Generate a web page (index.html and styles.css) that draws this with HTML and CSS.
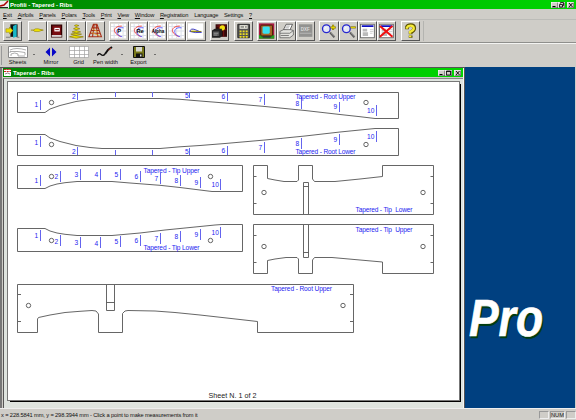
FILE: index.html
```
<!DOCTYPE html>
<html lang="en">
<head>
    <meta charset="UTF-8">
    <meta name="viewport" content="width=device-width, initial-scale=1.0">
    <title>Profili - Tapered - Ribs</title>
    <link rel="stylesheet" href="styles.css">
</head>
<body>
    <svg width="0" height="0" class="defs">
        <symbol id="polar" viewBox="0 0 17 17">
            <rect width="17" height="17" fill="#fff"/>
            <path d="M3.5 0v17M8.5 0v17M13.5 0v17M0 3.5h17M0 8.5h17M0 13.5h17" stroke="#d9dde6" fill="none"/>
            <path d="M12 3C6 3 3 6 4 9s4 4 7 6" stroke="#e33" fill="none"/>
            <path d="M14 5C8 4 6 7 6.500 10s3 4 6 5" stroke="#55f" fill="none"/>
        </symbol>
        <symbol id="lens" viewBox="0 0 17 17">
            <path d="M10 10l5 5.500" stroke="#555" stroke-width="2.200"/>
            <path d="M10.500 10l4.500 5" stroke="#aaa" stroke-width=".7"/>
            <circle cx="6" cy="6" r="4.300" fill="#e4e8f4" stroke="#2525d0" stroke-width="1.500"/>
            <path d="M4 6l2-2" stroke="#fff"/>
        </symbol>
        <symbol id="sheet" viewBox="0 0 17 17">
            <rect x=".5" y="1" width="15.500" height="15" fill="#fff" stroke="#666"/>
            <path d="M2 3h13" stroke="#1010c0" stroke-width="2"/>
            <path d="M3 6h5v3H3zM3 10h6v4H3z" fill="#bbb"/>
            <path d="M11 7h4M11 9h4M11 11h3" stroke="#ccc"/>
        </symbol>
    </svg>

    <div class="title-bar main-title">
        <svg class="app-icon" viewBox="0 0 9 9"><rect width="9" height="8" y=".5" fill="#eee"/><path d="M0 6l4-1 4-4" stroke="#a00" stroke-width="1.500" fill="none"/><path d="M0 7.500h8" stroke="#222"/></svg>
        <span>Profili - Tapered - Ribs</span>
        <div class="window-buttons">
            <i><svg viewBox="0 0 7 6"><path d="M1.500 4.500h3" stroke="#000"/></svg></i>
            <i><svg viewBox="0 0 7 6"><path d="M2.500 1.500V.5h3v3h-1M1.500 2.500h3v2.500h-3z" stroke="#000" stroke-width=".8" fill="none"/></svg></i>
            <i class="close"><svg viewBox="0 0 7 6"><path d="M2 1l3.500 4M5.500 1L2 5" stroke="#000" stroke-width=".9"/></svg></i>
        </div>
    </div>

    <div class="menu">
        <span><u>E</u>xit</span>
        <span><u>A</u>irfoils</span>
        <span><u>P</u>anels</span>
        <span><u>P</u>olars</span>
        <span><u>T</u>ools</span>
        <span><u>P</u>rint</span>
        <span><u>V</u>iew</span>
        <span><u>W</u>indow</span>
        <span><u>R</u>egistration</span>
        <span>Language</span>
        <span>Settings</span>
        <span><u>?</u></span>
    </div>

    <div class="toolbar">
        <div class="group first">
            <b><svg viewBox="0 0 17 17"><path d="M6 1h8v14H6z" fill="#111"/><path d="M9 3l4-2v14l-4 1z" fill="#18b8c8"/><path d="M1 6h4V4l4 4-4 4v-2H1z" fill="#eee000" stroke="#887800" stroke-width=".5"/><path d="M1 15.500h5M13 15.500h3" stroke="#777"/></svg></b>
        </div>
        <div class="group">
            <b><svg viewBox="0 0 17 17"><path d="M1 7.500h14" stroke="#998800"/><path d="M4 7.500q1-2 5-1.500l5 1.500-4 1.500H5z" fill="#f2e600" stroke="#887800" stroke-width=".6"/></svg></b>
            <b><svg viewBox="0 0 17 17"><path d="M3 2h11v13H3z" fill="#7a0c10" stroke="#300" stroke-width="1.500"/><path d="M3 13h11v2H3z" fill="#ddd"/><path d="M6 5h6v4H6z" fill="#fff"/><path d="M7 7h4" stroke="#700"/></svg></b>
            <b><svg viewBox="0 0 17 17"><g fill="#f2e600" stroke="#807000" stroke-width=".7"><path d="M6 2.500l2-1 3 1-3 1zM5 6l3-1.500L12 6 8 7zM3.500 9.500L8 8l5 1.500-5 1.200zM2 12l5-1 7 1-6 1.300zM.5 15L6 13.500l10 1.500-8 1.500z"/></g></svg></b>
            <b><svg viewBox="0 0 17 17"><path d="M6 1h4l5 14H1zM7 1L5 15M9 1l2 14M5 5h6M4 8h8M2 11h12M1 15h14" stroke="#a83018" stroke-width="1.200" fill="none"/><path d="M5 6l7 4M4 10l9 4" stroke="#e0a030"/></svg></b>
        </div>
        <div class="group">
            <b><svg viewBox="0 0 17 17"><use href="#polar"/><text x="7" y="11">P</text></svg></b>
            <b><svg viewBox="0 0 17 17"><use href="#polar"/><text x="6" y="11">Re</text></svg></b>
            <b><svg viewBox="0 0 17 17"><use href="#polar"/><text x="2" y="11" class="alpha">Alpha</text></svg></b>
            <b><svg viewBox="0 0 17 17"><use href="#polar"/></svg></b>
            <b><svg viewBox="0 0 17 17"><path d="M0 0h17v17H0z" fill="#fff"/><path d="M2 9q1-4 6-2l7 3q-7 1-13-1" fill="#eee6a0" stroke="#3030d0"/><path d="M3 9h12" stroke="#888000"/></svg></b>
        </div>
        <div class="group">
            <b><svg viewBox="0 0 17 17"><path d="M4 1h13v14H4z" fill="#33090a"/><path d="M5 3h11M5 7h11M8 1v14M13 1v14" stroke="#a01818" stroke-width=".7"/><circle cx="11.500" cy="5" r="3" fill="#f0df10"/><path d="M0 8l3-2h8v8l-2 2H0z" fill="#222"/><path d="M1 9h7v5H1z" fill="#555"/><path d="M2 11h5M2 13h4" stroke="#999"/></svg></b>
        </div>
        <div class="group">
            <b><svg viewBox="0 0 17 17"><path d="M2 1h13v15H2z" fill="#555" stroke="#222"/><path d="M4 2h9v4H4z" fill="#f4f4e8"/><path d="M5 4h4M10 4h2" stroke="#333"/><path d="M4 9h9M4 12h9M4 15h9" stroke="#f0e020" stroke-width="2" stroke-dasharray="2.200 1.200"/></svg></b>
        </div>
        <div class="group">
            <b><svg viewBox="0 0 17 17"><path d="M0 0h17v17H0z" fill="#a81840"/><path d="M0 13h17v4H0z" fill="#20a020"/><rect x="2" y="2" width="13" height="12" rx="1" fill="#a86828" stroke="#402000"/><rect x="4" y="3.500" width="8" height="8" rx="1.500" fill="#38e0f0"/><path d="M4 15h9" stroke="#333" stroke-width="2"/></svg></b>
            <b><svg viewBox="0 0 17 17"><path d="M5 7l3-6h7l-3 7z" fill="#fff" stroke="#333" stroke-width=".8"/><path d="M8 3h4M7 5h4" stroke="#777" stroke-width=".7"/><path d="M1 9l4-2h8l3 1v5l-4 3H1z" fill="#e4e4e0" stroke="#555" stroke-width=".8"/><path d="M1 11h11l4-3M2 13.500h9" stroke="#555" fill="none" stroke-width=".8"/></svg></b>
            <b><svg viewBox="0 0 17 17"><path d="M1 1h15v14H1z" fill="#929290"/><path d="M2 11h13" stroke="#bbb"/><text x="3" y="8" class="dxf">DXF</text></svg></b>
        </div>
        <div class="group">
            <b><svg viewBox="0 0 17 17"><use href="#lens"/><path d="M10.500 4.500h6M13.500 1.500v6" stroke="#776b00" stroke-width="2.200"/><path d="M11 4.500h5M13.500 2v5" stroke="#f0e000"/></svg></b>
            <b><svg viewBox="0 0 17 17"><use href="#lens"/><path d="M10.500 4.500h6" stroke="#776b00" stroke-width="2.200"/><path d="M11 4.500h5" stroke="#f0e000"/></svg></b>
            <b><svg viewBox="0 0 17 17"><use href="#sheet"/></svg></b>
            <b><svg viewBox="0 0 17 17"><use href="#sheet"/><path d="M1 3l14 12M15 3L1 15" stroke="#f01010" stroke-width="2.200"/></svg></b>
        </div>
        <div class="group last">
            <b><svg viewBox="0 0 17 17"><path d="M4.500 6.500V4q1-2 4-2 4 0 4 3.500 0 2.500-4 4.500v2M8.500 13.500v2.500" stroke="#5c5200" stroke-width="4.200" fill="none"/><path d="M4.500 6V4.500q1-2 4-2 3.500 0 3.500 3 0 2.500-4 4v2M8 13.500v2" stroke="#f5ea38" stroke-width="2.600" fill="none"/></svg></b>
        </div>
    </div>

    <div class="toolbar2">
        <div class="tool sheets">
            <svg width="20" height="12" viewBox="0 0 20 12"><path d="M.5.5h19v11H.5z" fill="#fff" stroke="#888"/><path d="M2 4q6-3 16 0M2 7V5.500h8l7 1V9M3 10V8q4-2 7 0v2h7" stroke="#999" fill="none" stroke-width=".8"/></svg>
            <span>Sheets</span>
        </div>
        <div class="arrow"></div>
        <div class="tool mirror">
            <svg width="12" height="12" viewBox="0 0 12 12"><path d="M5 1.500v9L.5 6zM7 1.500v9l4.500-4.500z" fill="#0808c8"/></svg>
            <span>Mirror</span>
        </div>
        <div class="tool grid">
            <svg width="20" height="12" viewBox="0 0 20 12"><path d="M.5.5h19v11H.5zM5.500 0v12M10.500 0v12M15.500 0v12M0 4.500h20M0 8.500h20" fill="#fff" stroke="#a0a0a0" stroke-width=".7"/></svg>
            <span>Grid</span>
        </div>
        <div class="tool pen">
            <svg width="17" height="12" viewBox="0 0 17 12"><path d="M0 9.500q2-3 4-1t4-.5" stroke="#111" fill="none" stroke-width="1.300"/><path d="M8 8l3-4 4-3" stroke="#111" stroke-width="2" fill="none"/><path d="M11.500 4l2.500-2" stroke="#c03020"/></svg>
            <span>Pen width</span>
        </div>
        <div class="arrow"></div>
        <div class="tool export">
            <svg width="12" height="12" viewBox="0 0 12 12"><path d="M.5.5h11v11H.5z" fill="#77771a" stroke="#111"/><path d="M3 1h6v4.500H3z" fill="#d8d8d0"/><path d="M3 7.500h6.500V11H3z" fill="#111"/><path d="M7 8.500h1.500v2H7z" fill="#ddd"/></svg>
            <span>Export</span>
        </div>
        <div class="arrow"></div>
    </div>

    <div class="workspace">
        <div class="child">
            <div class="title-bar">
                <svg class="app-icon" viewBox="0 0 9 9"><path d="M1 1.500h7v6.500H1z" fill="#fff"/><path d="M1 1.500h7M1 3.500h7" stroke="#d02020" stroke-dasharray="2 .7"/><path d="M2 6q3-2 5 0" stroke="#888" fill="none"/></svg>
                <span>Tapered - Ribs</span>
                <div class="window-buttons">
                    <i><svg viewBox="0 0 7 6"><path d="M1.500 4.500h3" stroke="#000"/></svg></i>
                    <i><svg viewBox="0 0 7 6"><path d="M1.500 1h4v4h-4zM1.500 1.500h4" stroke="#000" stroke-width=".8" fill="none"/></svg></i>
                    <i class="close"><svg viewBox="0 0 7 6"><path d="M2 1l3.500 4M5.500 1L2 5" stroke="#000" stroke-width=".9"/></svg></i>
                </div>
            </div>
            <div class="view">
                <svg class="paper" viewBox="8 82 451 318">
                    <!-- rib outlines -->
                    <g class="outline">
                        <path d="M45 112.500H17.500V92.500H398.500V118.500H375L360 116.700 340 114.500 305 110.500 265 106.500 225 103 200 101 180 99.300 160 98.500H102L90 99.500 76 101.500 60 105.500 50 109z"/>
                        <path d="M45 134.500H17.500V155.500H398.500V128.500H375L360 130 340 132 305 136 265 140 225 143.500 200 145.500 180 146.800 160 148.500H102L90 147.500 76 145.500 60 141.500 50 138z"/>
                        <path d="M45 188.500H17.500V165.500H242.500V191.500H212L200 190 180 187.500 160 185.300 130 183 112 181.500H77L65 182.700 57 184 50 186z"/>
                        <path d="M45 228.500H17.500V251.500H242.500V224.500H222L215 225 190 227.500 165 230 140 233 112 235.500H77L65 234.300 57 233 50 231z"/>
                        <path d="M253.500 165.500H267.500V178.500L275 180 284 181.500H297L298.500 180V165.500H312.500V179L314.500 181.500H335L360 179 382.500 176.500V165.500H433.500V214.500H253.500z"/>
                        <path d="M253.500 273.500H267.500V260.500L275 259 286 257.500H297L298.500 259V273.500H312.500V260L314.500 257.500H332L360 260 382.500 262V273.500H433.500V224.500H253.500z"/>
                        <path d="M17.500 284.500H353.500V332.500H257.500V321.500L240 319.500 200 315 175 312.500 155 311 128 310.500 125 311 122.500 313.500V332.500H98.500V314L96 311 92 310.500 80 311.300 65 312.500 50 315 38.500 317.500 37.500 319V332.500H17.500z"/>
                        <path d="M303.500 214V182.500H308.500V214M303.500 186.500H308.500M303.500 225V257.500H308.500V225M303.500 252.500H308.500M106.500 285V310.500H114.500V285M106.500 302.500H114.500"/>
                        <path d="M254 176.500h2.500M254 203.500h2.500M433 176.500h-2.500M433 203.500h-2.500M254 235.500h2.500M254 262.500h2.500M433 235.500h-2.500M433 262.500h-2.500M18 294.500h3M18 321.500h3M353 294.500h-3M353 321.500h-3"/>
                    </g>
                    <g class="hole">
                        <circle cx="51.500" cy="102.500" r="2.200"/><circle cx="366" cy="102.500" r="2.200"/>
                        <circle cx="51.500" cy="144.500" r="2.200"/><circle cx="366" cy="144.500" r="2.200"/>
                        <circle cx="51.500" cy="176.500" r="2.200"/><circle cx="210.500" cy="176.500" r="2.200"/>
                        <circle cx="51.500" cy="240.500" r="2.200"/><circle cx="210.500" cy="240.500" r="2.200"/>
                        <circle cx="264" cy="192.500" r="2.200"/><circle cx="423" cy="192.500" r="2.200"/>
                        <circle cx="264" cy="246.500" r="2.200"/><circle cx="423" cy="246.500" r="2.200"/>
                        <circle cx="28.500" cy="305.500" r="2.200"/><circle cx="343" cy="305.500" r="2.200"/>
                    </g>
                    <!-- station marks -->
                    <g class="mark">
                        <path d="M40.500 100v10M77.500 92v8M115.500 92v5M152.500 92v5M189.500 92v6M227.500 92v9M264.500 94v11M301.500 97v12M339.500 102v10M376.500 105v11"/>
                        <path d="M40.500 136v11M77.500 147v8M115.500 150v5M152.500 150v5M189.500 148v7M227.500 146v9M264.500 142v11M301.500 138v11M339.500 134v11M376.500 131v11"/>
                        <path d="M40.500 175v11M60.500 171v11M80.500 169v11M100.500 169v11M120.500 169v11M140.500 171v11M160.500 173v11M180.500 175v11M200.500 177v11M220.500 179v11"/>
                        <path d="M40.500 230v11M60.500 235v11M80.500 237v11M100.500 237v11M120.500 236v11M140.500 235v11M160.500 233v11M180.500 231v11M200.500 229v11M220.500 227v11"/>
                    </g>
                    <g class="label">
                        <text x="34.500" y="107">1</text><text x="72" y="98.500">2</text><text x="185" y="97.500">5</text><text x="221.500" y="99">6</text><text x="258.500" y="101.500">7</text><text x="295.500" y="106">8</text><text x="333.500" y="109">9</text><text x="367" y="113">10</text>
                        <text x="34.500" y="144.500">1</text><text x="72" y="153.500">2</text><text x="185" y="153.500">5</text><text x="221.500" y="153">6</text><text x="258.500" y="149.500">7</text><text x="295.500" y="145.500">8</text><text x="333.500" y="142">9</text><text x="367" y="138.500">10</text>
                        <text x="34.500" y="183">1</text><text x="54.500" y="178.500">2</text><text x="74.500" y="176.500">3</text><text x="94.500" y="176.500">4</text><text x="114.500" y="177">5</text><text x="134.500" y="179">6</text><text x="154.500" y="180.500">7</text><text x="174.500" y="182.500">8</text><text x="194.500" y="184.500">9</text><text x="211.500" y="187">10</text>
                        <text x="34.500" y="238">1</text><text x="54.500" y="243.500">2</text><text x="74.500" y="245">3</text><text x="94.500" y="245.500">4</text><text x="114.500" y="244">5</text><text x="134.500" y="243">6</text><text x="154.500" y="241">7</text><text x="174.500" y="239">8</text><text x="194.500" y="237">9</text><text x="211.500" y="235">10</text>
                        <text x="295.500" y="99" textLength="60">Tapered - Root Upper</text>
                        <text x="295.500" y="153.500" textLength="60">Tapered - Root Lower</text>
                        <text x="143.500" y="172.500" textLength="56">Tapered - Tip Upper</text>
                        <text x="143.500" y="249.500" textLength="56">Tapered - Tip Lower</text>
                        <text x="355.500" y="211.500" textLength="57">Tapered - Tip&#160; Lower</text>
                        <text x="355.500" y="232" textLength="57">Tapered - Tip&#160; Upper</text>
                        <text x="271" y="291" textLength="61">Tapered - Root Upper</text>
                    </g>
                    <text class="sheet-no" x="208.500" y="398" textLength="48">Sheet N. 1 of 2</text>
                </svg>
            </div>
        </div>
        <div class="backdrop">
            <svg width="110" height="60" viewBox="465 290 110 60">
                <text class="pro shade" x="470.500" y="337.800" textLength="74" lengthAdjust="spacingAndGlyphs">Pro</text>
                <text class="pro" x="469" y="336.300" textLength="74" lengthAdjust="spacingAndGlyphs">Pro</text>
            </svg>
        </div>
    </div>

    <div class="status">
        <span class="coords">x = 228.5841 mm, y = 298.3944 mm - Click a point to make measurements from it</span>
        <div class="panel small"></div>
        <div class="panel num">NUM</div>
        <div class="panel small"></div>
    </div>
</body>
</html>
```

FILE: styles.css
```
body {
    margin: 0;
    width: 576px;
    height: 420px;
    overflow: hidden;
    display: flex;
    flex-direction: column;
    background: #cfcdc8;
    font-family: 'Liberation Sans', Arial, sans-serif;
    font-size: 5.7px;
    color: #111;
    white-space: nowrap;
}
svg {
    display: block;
    flex: none;
}
.defs {
    display: none;
}
.title-bar {
    display: flex;
    align-items: center;
    gap: 1px;
    height: 9px;
    flex: none;
    background: linear-gradient(90deg, #008400, #00d600);
    color: #fff;
    font-size: 6px;
    font-weight: bold;
}
.main-title {
    letter-spacing: -0.05px;
}
.app-icon {
    width: 9px;
    height: 9px;
}
.window-buttons {
    display: flex;
    margin-left: auto;
    padding-right: 2px;
}
.window-buttons i {
    width: 7px;
    height: 6px;
    background: #d0cec8;
    box-shadow: inset 0.5px 0.5px #fff, inset -0.5px -0.5px #444;
}
.window-buttons .close {
    margin-left: 2px;
}
.menu {
    display: flex;
    align-items: center;
    gap: 5.8px;
    height: 9px;
    flex: none;
    padding: 1px 0 0 3px;
    border-bottom: 1px solid #bcbcb8;
    letter-spacing: -0.16px;
}
.menu u {
    text-decoration-thickness: 0.5px;
    text-underline-offset: 0.5px;
}
.toolbar {
    display: flex;
    align-items: center;
    gap: 4.4px;
    height: 22px;
    flex: none;
    padding-left: 3px;
    border-bottom: 1px solid #8f8f8c;
}
.group {
    display: flex;
}
.first {
    margin-right: 1.4px;
}
.last {
    padding-right: 3px;
    border-right: 1px solid #b4b4b0;
}
.toolbar b {
    box-sizing: border-box;
    width: 19.25px;
    height: 20px;
    padding: 1px;
    background: #d0cec8;
    border: 1px solid;
    border-color: #fff #555 #555 #fff;
}
.toolbar b svg {
    width: 100%;
    height: 100%;
}
.toolbar text {
    font-size: 6.5px;
    font-weight: bold;
}
.toolbar .alpha {
    font-size: 5px;
}
.toolbar .dxf {
    font-size: 5px;
    fill: #ddd;
}
.toolbar2 {
    display: flex;
    height: 21px;
    flex: none;
    padding-top: 2px;
    border-top: 1px solid #f4f4f2;
}
.toolbar2::before {
    content: "";
    width: 1px;
    height: 19px;
    background: #999;
    margin: 0 1px 0 1px;
}
.tool {
    display: flex;
    flex-direction: column;
    align-items: center;
    gap: 1px;
    line-height: 7px;
}
.sheets {
    width: 29px;
}
.mirror {
    width: 30px;
}
.grid {
    width: 25px;
}
.pen {
    width: 29px;
}
.export {
    width: 29px;
}
.arrow {
    width: 0;
    height: 0;
    margin: 8px 1px 0;
    border: 1.5px solid transparent;
    border-top-color: #111;
}
.workspace {
    display: flex;
    height: 341px;
    flex: none;
}
.child {
    box-sizing: border-box;
    width: 465px;
    padding: 0 1px 0 3px;
    background: #cfcdc8;
    border: solid #555;
    border-width: 1px 1px 0 0;
    box-shadow: inset 2px 0 #777, inset -1px 0 #f4f4f4;
}
.view {
    margin-top: 1px;
    padding: 3px 0 5px 4px;
    height: 322px;
    background: #dfe4df;
    border-top: 1px solid #888;
    border-left: 1px solid #555;
}
.paper {
    width: 451px;
    height: 318px;
    background: #fff;
    outline: 1px solid #777;
    box-shadow: 1px 1px #000, 2px 2px #000;
}
.outline, .hole {
    fill: none;
    stroke: #555;
    stroke-width: 0.9;
}
.mark {
    fill: none;
    stroke: #6464ee;
}
.label {
    fill: #2424f0;
    font-size: 6.6px;
}
.sheet-no {
    fill: #222;
    font-size: 7.2px;
}
.backdrop {
    width: 110px;
    background: #004080;
    padding-top: 223px;
    box-sizing: border-box;
}
.pro {
    font-size: 51px;
    font-weight: bold;
    font-style: italic;
    fill: #fff;
    stroke: #fff;
    stroke-width: 0.7;
}
.shade {
    fill: #003c10;
    stroke: #003c10;
}
.status {
    display: flex;
    align-items: center;
    height: 12px;
    flex: none;
    gap: 1px;
    border-top: 1px solid #eee;
}
.coords {
    margin-right: auto;
    padding-left: 1px;
    letter-spacing: -0.12px;
}
.panel {
    box-sizing: border-box;
    height: 8px;
    border: 1px solid;
    border-color: #999 #eee #eee #999;
    line-height: 7px;
    text-align: center;
}
.small {
    width: 10px;
}
.num {
    width: 15px;
}
```
